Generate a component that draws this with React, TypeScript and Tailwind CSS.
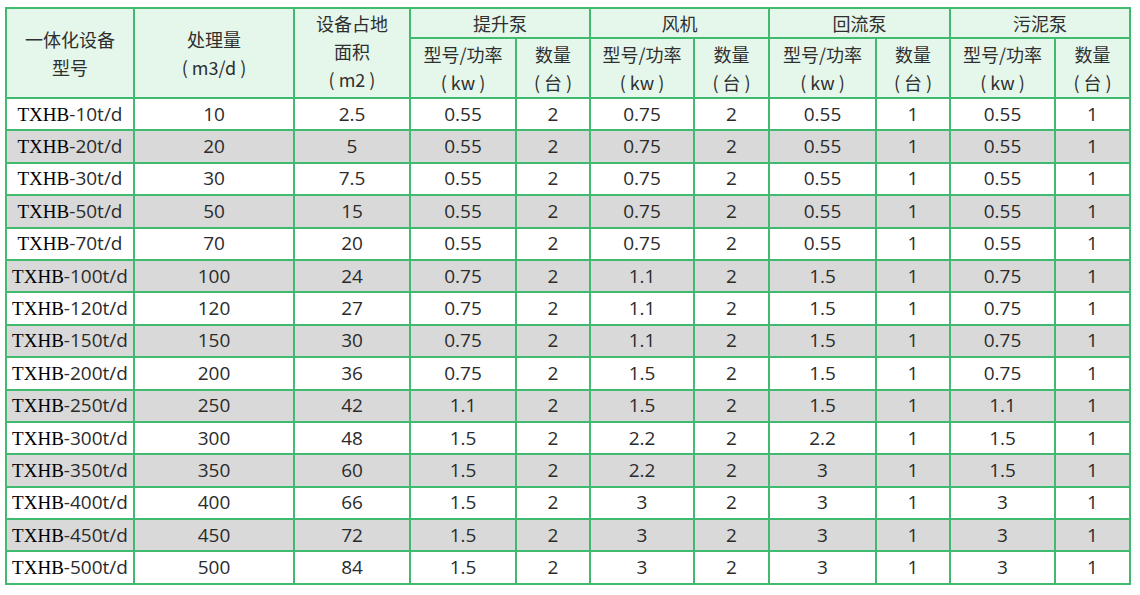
const rows: string[][] = [
  ["10", "10", "2.5", "0.55", "2", "0.75", "2", "0.55", "1", "0.55", "1"],
  ["20", "20", "5", "0.55", "2", "0.75", "2", "0.55", "1", "0.55", "1"],
  ["30", "30", "7.5", "0.55", "2", "0.75", "2", "0.55", "1", "0.55", "1"],
  ["50", "50", "15", "0.55", "2", "0.75", "2", "0.55", "1", "0.55", "1"],
  ["70", "70", "20", "0.55", "2", "0.75", "2", "0.55", "1", "0.55", "1"],
  ["100", "100", "24", "0.75", "2", "1.1", "2", "1.5", "1", "0.75", "1"],
  ["120", "120", "27", "0.75", "2", "1.1", "2", "1.5", "1", "0.75", "1"],
  ["150", "150", "30", "0.75", "2", "1.1", "2", "1.5", "1", "0.75", "1"],
  ["200", "200", "36", "0.75", "2", "1.5", "2", "1.5", "1", "0.75", "1"],
  ["250", "250", "42", "1.1", "2", "1.5", "2", "1.5", "1", "1.1", "1"],
  ["300", "300", "48", "1.5", "2", "2.2", "2", "2.2", "1", "1.5", "1"],
  ["350", "350", "60", "1.5", "2", "2.2", "2", "3", "1", "1.5", "1"],
  ["400", "400", "66", "1.5", "2", "3", "2", "3", "1", "3", "1"],
  ["450", "450", "72", "1.5", "2", "3", "2", "3", "1", "3", "1"],
  ["500", "500", "84", "1.5", "2", "3", "2", "3", "1", "3", "1"],
];

const widths = [128, 160, 116, 106, 74, 104, 75, 107, 74, 105, 75];

const groups = ["提升泵", "风机", "回流泵", "污泥泵"];

// header text: CJK sans, slightly larger than the body
const th =
  "border-2 border-[#3fba6e] bg-[#e5f6ea] p-0 text-[#2f2f2f] text-[18px] font-normal leading-[28px] font-[family-name:'Noto_Sans_CJK_SC',sans-serif]";
const td =
  "border-2 border-[#3fba6e] p-0 text-center text-[19px] leading-none text-[#2b2b2b] font-[family-name:'Open_Sans','Noto_Sans_CJK_SC',sans-serif]";

export default function App() {
  return (
    <div className="min-h-[595px] w-[1140px] bg-white pl-[5px] pt-[7px]">
      <table className="w-[1126px] table-fixed border-collapse border-2 border-[#3fba6e]">
        <colgroup>
          {widths.map((w, i) => (
            <col key={i} style={{ width: w }} />
          ))}
        </colgroup>
        <thead>
          <tr className="h-[26px]">
            <th rowSpan={2} className={`${th} align-middle`}>
              一体化设备
              <br />
              型号
            </th>
            <th rowSpan={2} className={`${th} align-middle`}>
              处理量
              <br />( m3/d )
            </th>
            <th rowSpan={2} className={`${th} align-top leading-[27px]`}>
              设备占地
              <br />
              面积
              <br />( m2 )
            </th>
            {groups.map((g) => (
              <th key={g} colSpan={2} className={`${th} leading-[22px]`}>
                {g}
              </th>
            ))}
          </tr>
          <tr className="h-[60px]">
            {groups.flatMap((g) => [
              <th key={g + "a"} className={th}>
                型号/功率
                <br />( kw )
              </th>,
              <th key={g + "b"} className={th}>
                数量
                <br />( 台 )
              </th>,
            ])}
          </tr>
        </thead>
        <tbody>
          {rows.map((r, i) => (
            <tr key={i} className={i % 2 === 1 ? "h-[32.4px] bg-[#d9d9d9]" : "h-[32.4px] bg-white"}>
              <td className={td}>
                <span className="font-[family-name:'Liberation_Serif',serif] text-[19px] text-black">TXHB</span>
                <span>-{r[0]}t/d</span>
              </td>
              {r.slice(1).map((v, j) => (
                <td key={j} className={td}>
                  {v}
                </td>
              ))}
            </tr>
          ))}
        </tbody>
      </table>
    </div>
  );
}
